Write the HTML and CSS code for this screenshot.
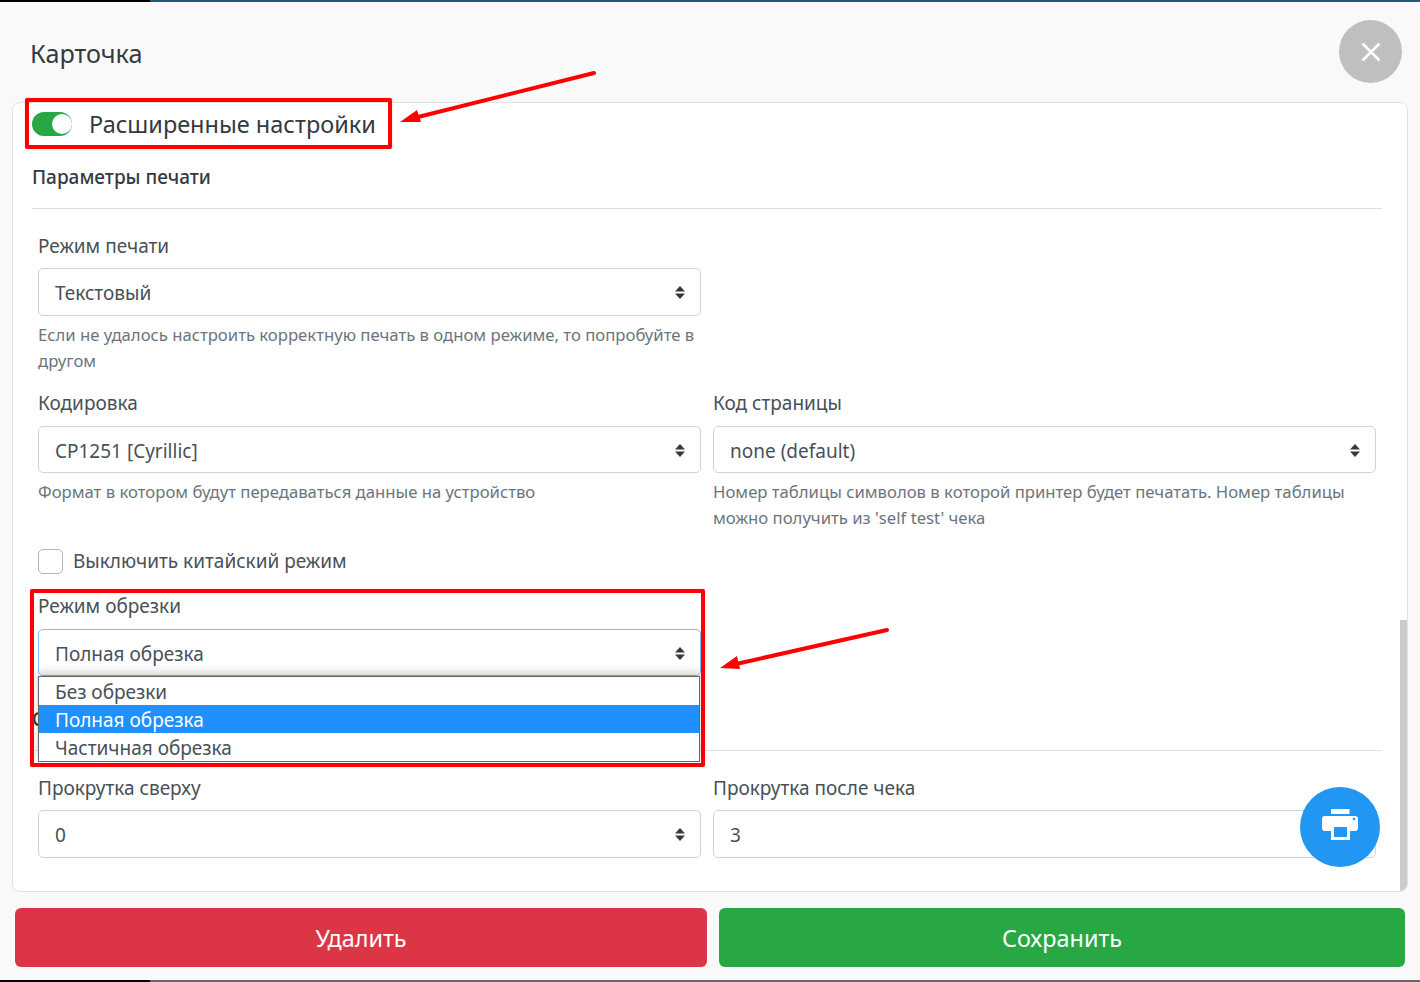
FILE: index.html
```html
<!DOCTYPE html>
<html lang="ru">
<head>
    <meta charset="UTF-8">
    <title>Карточка</title>
    <link rel="stylesheet" href="styles.css">
</head>
<body>
    <div class="top-strip"><span class="strip-dark"></span></div>

    <header class="modal-header">
        <h1 class="modal-title">Карточка</h1>
        <button class="close-btn" aria-label="Закрыть">
            <svg width="20" height="20" viewBox="0 0 20 20"><path d="M1.5 1.5l17 17M18.500 1.500l-17 17" stroke="#fff" stroke-width="2.6" fill="none"/></svg>
        </button>
    </header>

    <main class="card">
        <div class="switch-row">
            <span class="switch"><span class="switch-knob"></span></span>
            <span class="switch-label">Расширенные настройки</span>
        </div>

        <h2 class="section-title">Параметры печати</h2>
        <hr class="section-line">

        <div class="form-row">
            <div class="field">
                <label class="field-label">Режим печати</label>
                <div class="select">
                    <span>Текстовый</span>
                    <svg class="caret" width="10" height="13" viewBox="0 0 10 13"><path d="M5 0l5 5.500H0zM5 13l5-5.500H0z" fill="#343a40"/></svg>
                </div>
                <p class="help">Если не удалось настроить корректную печать в одном режиме, то попробуйте в другом</p>
            </div>
            <div class="field"></div>
        </div>

        <div class="form-row">
            <div class="field">
                <label class="field-label">Кодировка</label>
                <div class="select">
                    <span>CP1251 [Cyrillic]</span>
                    <svg class="caret" width="10" height="13" viewBox="0 0 10 13"><path d="M5 0l5 5.500H0zM5 13l5-5.500H0z" fill="#343a40"/></svg>
                </div>
                <p class="help">Формат в котором будут передаваться данные на устройство</p>
            </div>
            <div class="field">
                <label class="field-label">Код страницы</label>
                <div class="select">
                    <span>none (default)</span>
                    <svg class="caret" width="10" height="13" viewBox="0 0 10 13"><path d="M5 0l5 5.500H0zM5 13l5-5.500H0z" fill="#343a40"/></svg>
                </div>
                <p class="help">Номер таблицы символов в которой принтер будет печатать. Номер таблицы можно получить из 'self test' чека</p>
            </div>
        </div>

        <div class="check-row">
            <span class="checkbox"></span>
            <span class="check-label">Выключить китайский режим</span>
        </div>

        <div class="form-row">
            <div class="field field-open">
                <label class="field-label">Режим обрезки</label>
                <div class="select select-focus">
                    <span>Полная обрезка</span>
                    <svg class="caret" width="10" height="13" viewBox="0 0 10 13"><path d="M5 0l5 5.500H0zM5 13l5-5.500H0z" fill="#343a40"/></svg>
                </div>
                <ul class="dropdown">
                    <li>Без обрезки</li>
                    <li class="selected">Полная обрезка</li>
                    <li>Частичная обрезка</li>
                </ul>
            </div>
            <div class="field"></div>
        </div>

        <h2 class="section-title section-second">Сдвиг бумаги</h2>
        <hr class="section-line">

        <div class="form-row">
            <div class="field">
                <label class="field-label">Прокрутка сверху</label>
                <div class="select">
                    <span>0</span>
                    <svg class="caret" width="10" height="13" viewBox="0 0 10 13"><path d="M5 0l5 5.500H0zM5 13l5-5.500H0z" fill="#343a40"/></svg>
                </div>
            </div>
            <div class="field">
                <label class="field-label">Прокрутка после чека</label>
                <div class="select"><span>3</span></div>
            </div>
        </div>

        <div class="scrollbar"><div class="scroll-thumb"></div></div>
    </main>

    <footer class="modal-footer">
        <button class="btn btn-delete">Удалить</button>
        <button class="btn btn-save">Сохранить</button>
    </footer>

    <div class="bottom-strip"><span class="strip-dark"></span></div>

    <button class="print-fab" aria-label="Печать">
        <svg class="print-icon" width="36" height="31" viewBox="0 0 36 31">
            <rect x="9" y="0" width="18.500" height="5" fill="#fff"/>
            <path d="M3 7h30a3 3 0 0 1 3 3v9a3 3 0 0 1-3 3h-5v9H9v-9H3a3 3 0 0 1-3-3v-9a3 3 0 0 1 3-3z" fill="#fff"/>
            <rect x="12" y="18" width="13" height="10" fill="#2196f3"/>
            <circle cx="32" cy="10" r="1.300" fill="#2196f3"/>
        </svg>
    </button>

    <!-- red marks drawn over the screenshot -->
    <div class="mark mark-switch"></div>
    <div class="mark mark-select"></div>
    <svg class="arrows" width="1420" height="982" viewBox="0 0 1420 982">
        <path d="M594 73L414 118" stroke="#f00" stroke-width="4" stroke-linecap="round" fill="none"/>
        <path d="M400 122L417 110L421 122z" fill="#f00"/>
        <path d="M887 630L736 664" stroke="#f00" stroke-width="4" stroke-linecap="round" fill="none"/>
        <path d="M720 668L737 656L740 669z" fill="#f00"/>
    </svg>
</body>
</html>
```

FILE: styles.css
```css
* {
    box-sizing: border-box;
}
body {
    font-family: 'Noto Sans', 'Open Sans', sans-serif;
    background-color: #f9f9f9;
    margin: 0;
    width: 1420px;
    height: 982px;
    overflow: hidden;
    display: flex;
    flex-direction: column;
    position: relative;
    color: #343a40;
}
.top-strip {
    height: 2px;
    background-color: #1f5b7f;
    flex-shrink: 0;
}
.bottom-strip {
    height: 2px;
    margin-top: 13px;
    background-color: #666;
    flex-shrink: 0;
}
.strip-dark {
    display: block;
    width: 150px;
    height: 100%;
    background-color: #000;
}
.modal-header {
    height: 100px;
    flex-shrink: 0;
    display: flex;
    justify-content: space-between;
    align-items: flex-start;
    padding: 18px 18px 0 30px;
}
.modal-title {
    margin: 15px 0 0;
    font-size: 25.200px;
    font-weight: 400;
    line-height: 36px;
}
.close-btn {
    width: 63px;
    height: 63px;
    border: none;
    border-radius: 50%;
    background-color: #bfbfbf;
    padding: 0;
    display: flex;
    align-items: center;
    justify-content: center;
}
.card {
    position: relative;
    flex: 1;
    margin: 0 12px;
    padding: 9px 25px 0 19px;
    background-color: white;
    border: 1px solid #e2e2e2;
    border-radius: 8px;
    overflow: hidden;
}
.switch-row {
    display: flex;
    align-items: center;
    height: 24px;
}
.switch {
    width: 40px;
    height: 24px;
    border-radius: 12px;
    background-color: #28a745;
    display: flex;
    align-items: center;
    justify-content: flex-end;
}
.switch-knob {
    width: 20px;
    height: 20px;
    border-radius: 50%;
    background-color: white;
}
.switch-label {
    margin-left: 17px;
    font-size: 23.500px;
    line-height: 24px;
}
.section-title {
    margin: 27px 0 0;
    font-size: 19px;
    font-weight: 500;
    line-height: 28px;
}
.section-second {
    margin-top: 29px;
}
.section-line {
    margin: 17px 0 0;
    border: none;
    border-top: 1px solid #e0e0e0;
}
.form-row {
    display: flex;
    gap: 12px;
    padding: 0 6px;
}
.section-line + .form-row {
    margin-top: 22.500px;
}
.field {
    flex: 1;
    min-width: 0;
    margin-bottom: 15.500px;
    position: relative;
}
.field-label {
    display: block;
    font-size: 19px;
    line-height: 29px;
    margin-bottom: 7.500px;
    color: #495057;
}
.select {
    height: 47.500px;
    padding: 3px 15px 0 16px;
    border: 1px solid #ced4da;
    border-radius: 5px;
    background-color: white;
    display: flex;
    align-items: center;
    justify-content: space-between;
    font-size: 19px;
    color: #495057;
}
.select-focus {
    border-color: #80bdff;
}
.caret {
    flex-shrink: 0;
    margin-top: -1px;
}
.help {
    margin: 6px 0 0;
    font-size: 16.700px;
    line-height: 26px;
    color: #6c757d;
}
.check-row {
    display: flex;
    align-items: center;
    height: 28px;
    padding-left: 6px;
    margin: 0.500px 0 17px;
}
.checkbox {
    width: 25px;
    height: 25px;
    border: 1px solid #adb5bd;
    border-radius: 5px;
    background-color: white;
}
.check-label {
    margin-left: 10px;
    font-size: 19px;
    color: #495057;
}
.field-open {
    margin-bottom: 0;
}
.dropdown {
    position: absolute;
    top: 83.500px;
    left: 0;
    width: 662px;
    margin: 0;
    padding: 0;
    list-style: none;
    background-color: white;
    border: 1px solid #666;
    box-shadow: 0 -4px 8px rgba(0,0,0,0.18);
    font-size: 19px;
    color: #495057;
    z-index: 2;
}
.dropdown li {
    height: 28px;
    line-height: 30px;
    padding-left: 16px;
}
.dropdown .selected {
    background-color: #1e90ff;
    color: white;
}
.scrollbar {
    position: absolute;
    top: 0;
    right: 0;
    bottom: 0;
    width: 7px;
    background-color: white;
}
.scroll-thumb {
    position: absolute;
    top: 517px;
    bottom: 0;
    left: 0;
    right: 0;
    background-color: #ccc;
}
.modal-footer {
    flex-shrink: 0;
    display: flex;
    gap: 12px;
    padding: 16px 15px 0;
}
.btn {
    height: 59px;
    border: none;
    border-radius: 6px;
    color: white;
    font-family: inherit;
    font-size: 23.400px;
}
.btn-delete {
    width: 692px;
    background-color: #dc3545;
}
.btn-save {
    width: 686px;
    background-color: #28a745;
}
.print-fab {
    position: absolute;
    left: 1300px;
    top: 787px;
    width: 80px;
    height: 80px;
    border: none;
    border-radius: 50%;
    background-color: #2196f3;
    padding: 0;
    display: flex;
    align-items: center;
    justify-content: center;
}
.print-icon {
    margin-bottom: 5px;
}
.mark {
    position: absolute;
    border: 4px solid #f00;
    border-radius: 2px;
    box-shadow: 0 0 1px rgba(255,0,0,0.6);
    pointer-events: none;
}
.mark-switch {
    left: 25px;
    top: 98px;
    width: 367px;
    height: 51px;
}
.mark-select {
    left: 30px;
    top: 589px;
    width: 675px;
    height: 178px;
}
.arrows {
    position: absolute;
    left: 0;
    top: 0;
    pointer-events: none;
}
```
